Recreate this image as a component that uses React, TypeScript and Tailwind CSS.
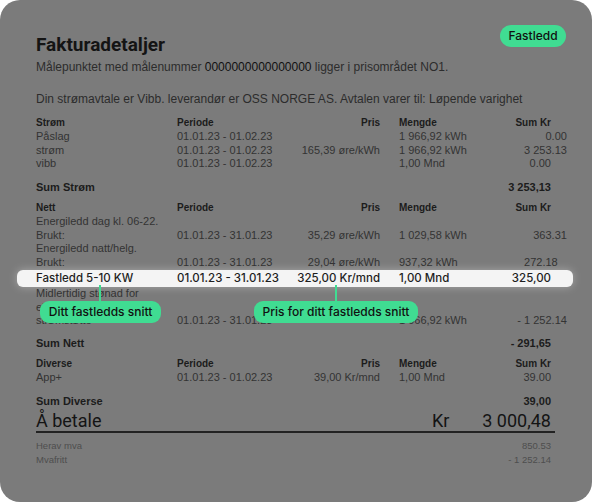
import React from "react";

type Row = {
  label: string;
  periode?: string;
  pris?: string;
  mengde?: string;
  sum?: string;
};

const grid =
  "grid grid-cols-[141px_96px_107px_1fr_100px] items-center";

function Header({ label }: { label: string }) {
  return (
    <div className={`${grid} h-[14px] text-[10px] font-bold leading-[14px] text-[#1c1c1c]`}>
      <span>{label}</span>
      <span>Periode</span>
      <span className="text-right">Pris</span>
      <span className="pl-[19px]">Mengde</span>
      <span className="text-right">Sum Kr</span>
    </div>
  );
}

function Line({ row }: { row: Row }) {
  return (
    <div className={`${grid} h-[13.7px] text-[11px] leading-[13.7px] text-[#333]`}>
      <span className="whitespace-nowrap">{row.label}</span>
      <span className="whitespace-nowrap">{row.periode}</span>
      <span className="whitespace-nowrap text-right">{row.pris}</span>
      <span className="whitespace-nowrap pl-[19px]">{row.mengde}</span>
      <span className="whitespace-nowrap text-right">{row.sum}</span>
    </div>
  );
}

function Sum({ label, value }: { label: string; value: string }) {
  return (
    <div className="flex h-[14px] items-center justify-between text-[11px] font-bold leading-[14px] text-[#1c1c1c]">
      <span>{label}</span>
      <span>{value}</span>
    </div>
  );
}

export default function App() {
  const strom: Row[] = [
    { label: "Påslag", periode: "01.01.23 - 01.02.23", mengde: "1 966,92 kWh", sum: "0.00" },
    { label: "strøm", periode: "01.01.23 - 01.02.23", pris: "165,39 øre/kWh", mengde: "1 966,92 kWh", sum: "3 253.13" },
    { label: "vibb", periode: "01.01.23 - 01.02.23", mengde: "1,00 Mnd", sum: "0.00" },
  ];

  return (
    <div className="min-h-[502px] bg-white">
      <div className="relative h-[502px] w-[592px] overflow-hidden rounded-[20px] bg-[#7b7b7b] pl-[36px] pr-[41px] pt-[34px] font-['Liberation_Sans',Arial,sans-serif]">
        {/* Badge */}
        <div className="absolute left-[500px] top-[25px] flex h-[22px] w-[66px] items-center justify-center rounded-full bg-[#40dc92] font-['Inter',sans-serif] text-[12px] font-medium text-[#111]">
          Fastledd
        </div>

        <h1 className="h-[22px] font-['Roboto',sans-serif] text-[19px] font-bold leading-[22px] text-[#141414]">
          Fakturadetaljer
        </h1>
        <p className="mt-[4px] h-[14px] whitespace-nowrap text-[12px] leading-[14px] text-[#2c2c2c]">
          Målepunktet med målenummer{" "}
          <span className="text-[#111]">0000000000000000</span> ligger i prisområdet NO1.
        </p>
        <p className="mt-[18px] h-[14px] whitespace-nowrap text-[12px] leading-[14px] text-[#2c2c2c]">
          Din strømavtale er Vibb. leverandør er OSS NORGE AS. Avtalen varer til: Løpende varighet
        </p>

        {/* Strøm */}
        <div className="mt-[10px]">
          <Header label="Strøm" />
          {strom.map((r) => (
            <Line key={r.label} row={r} />
          ))}
        </div>
        <div className="mt-[9px]">
          <Sum label="Sum Strøm" value="3 253,13" />
        </div>

        {/* Nett */}
        <div className="mt-[7px]">
          <Header label="Nett" />
          <Line row={{ label: "Energiledd dag kl. 06-22." }} />
          <Line row={{ label: "Brukt:", periode: "01.01.23 - 31.01.23", pris: "35,29 øre/kWh", mengde: "1 029,58 kWh", sum: "363.31" }} />
          <Line row={{ label: "Energiledd natt/helg." }} />
          <Line row={{ label: "Brukt:", periode: "01.01.23 - 31.01.23", pris: "29,04 øre/kWh", mengde: "937,32 kWh", sum: "272.18" }} />

          {/* Highlighted row */}
          <div className="ml-[-19px] mr-[-22px] rounded-[6px] bg-[#f4f4f4] pl-[19px] pr-[22px] shadow-[0_0_8px_rgba(255,255,255,0.35)]">
            <div className={`${grid} h-[17px] font-['Inter',sans-serif] text-[11.5px] font-medium leading-[17px] text-[#1e1e1e]`}>
              <span>Fastledd 5-10 KW</span>
              <span className="whitespace-nowrap">01.01.23 - 31.01.23</span>
              <span className="whitespace-nowrap text-right">325,00 Kr/mnd</span>
              <span className="pl-[19px]">1,00 Mnd</span>
              <span className="text-right">325,00</span>
            </div>
          </div>

          <Line row={{ label: "Midlertidig stønad for" }} />
          <Line row={{ label: "elektrisitet" }} />
          <Line row={{ label: "strømstøtte", periode: "01.01.23 - 31.01.23", pris: "-", mengde: "1 966,92 kWh", sum: "- 1 252.14" }} />
        </div>
        <div className="mt-[8px]">
          <Sum label="Sum Nett" value="- 291,65" />
        </div>

        {/* Diverse */}
        <div className="mt-[7px]">
          <Header label="Diverse" />
          <Line row={{ label: "App+", periode: "01.01.23 - 01.02.23", pris: "39,00 Kr/mnd", mengde: "1,00 Mnd", sum: "39.00" }} />
        </div>
        <div className="mt-[9px]">
          <Sum label="Sum Diverse" value="39,00" />
        </div>

        {/* Å betale */}
        <div className="mt-[5px] mr-[-4px] flex h-[20px] items-end border-b-2 border-[#222] pr-[4px] font-['Roboto',sans-serif] text-[18px] leading-[20px] text-[#141414]">
          <span className="flex-1">Å betale</span>
          <span className="w-[18px]">Kr</span>
          <span className="w-[101px] text-right">3 000,48</span>
        </div>

        <div className="mt-[6px] text-[9.5px] leading-[14px] text-[#4e4e4e]">
          <div className="flex justify-between">
            <span>Herav mva</span>
            <span>850.53</span>
          </div>
          <div className="flex justify-between">
            <span>Mvafritt</span>
            <span>- 1 252.14</span>
          </div>
        </div>

        {/* Callouts */}
        <div className="absolute left-[99px] top-[285px] h-[17px] w-[2px] bg-[#40dc92]" />
        <div className="absolute left-[40px] top-[301px] flex h-[22px] w-[121px] items-center justify-center rounded-[9px] bg-[#40dc92] font-['Inter',sans-serif] text-[12px] font-medium text-[#111]">
          Ditt fastledds snitt
        </div>
        <div className="absolute left-[335px] top-[285px] h-[17px] w-[2px] bg-[#40dc92]" />
        <div className="absolute left-[254px] top-[301px] flex h-[22px] w-[164px] items-center justify-center rounded-[9px] bg-[#40dc92] font-['Inter',sans-serif] text-[12px] font-medium text-[#111]">
          Pris for ditt fastledds snitt
        </div>
      </div>
    </div>
  );
}
